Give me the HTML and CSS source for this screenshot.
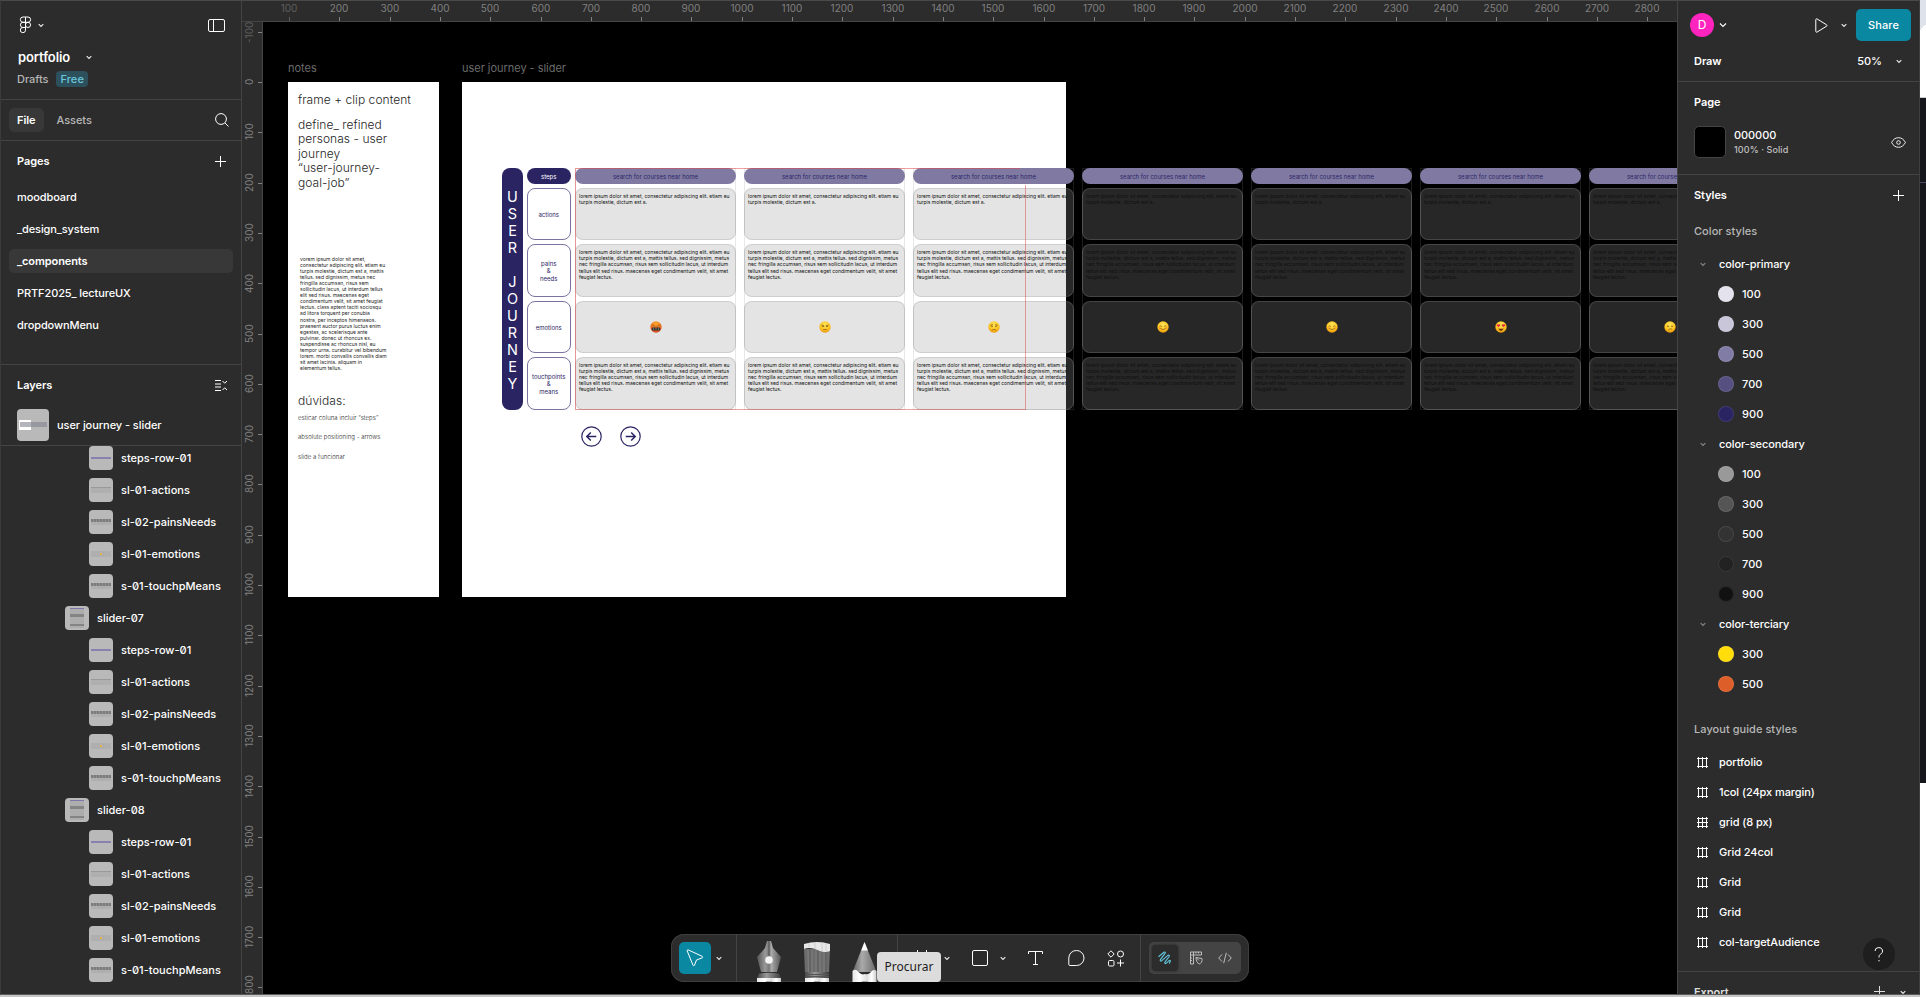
FILE: index.html
```html
<!DOCTYPE html>
<html lang="en">
<head>
<meta charset="utf-8">
<title>portfolio</title>
<link rel="stylesheet" href="styles.css">
</head>
<body>
<svg class="defs" width="0" height="0" aria-hidden="true">
  <defs>
    <radialGradient id="face" cx=".5" cy=".3" r=".7"><stop offset="0" stop-color="#ffe65a"/><stop offset=".65" stop-color="#fcc320"/><stop offset="1" stop-color="#e8930c"/></radialGradient>
    <radialGradient id="rage" cx=".5" cy=".2" r=".8"><stop offset="0" stop-color="#ffa72e"/><stop offset="1" stop-color="#d8481c"/></radialGradient>
    <linearGradient id="metal"><stop offset="0" stop-color="#555"/><stop offset=".35" stop-color="#999"/><stop offset=".5" stop-color="#777"/><stop offset=".6" stop-color="#aaa"/><stop offset="1" stop-color="#555"/></linearGradient>
    <linearGradient id="barrel"><stop offset="0" stop-color="#e6e6e6"/><stop offset=".3" stop-color="#fff"/><stop offset=".6" stop-color="#ddd"/><stop offset=".8" stop-color="#fff"/><stop offset="1" stop-color="#ccc"/></linearGradient>
    <linearGradient id="band"><stop offset="0" stop-color="#444"/><stop offset=".4" stop-color="#999"/><stop offset="1" stop-color="#3c3c3c"/></linearGradient>
    <linearGradient id="lead"><stop offset="0" stop-color="#5d5d5d"/><stop offset=".4" stop-color="#aaa"/><stop offset="1" stop-color="#686868"/></linearGradient>
  </defs>
  <symbol id="chev" viewBox="0 0 6 5"><path d="M.7 1.1 3 3.4 5.3 1.1" fill="none" stroke="currentColor" stroke-width="1.1"/></symbol>
  <symbol id="plus" viewBox="0 0 11 11"><path d="M5.5 0v11M0 5.5h11" stroke="currentColor"/></symbol>
  <symbol id="cols" viewBox="0 0 11 11"><path d="M1.5 0v11M5.5 0v11M9.5 0v11M0 1.5h11M0 9.5h11" stroke="currentColor"/></symbol>
  <symbol id="grid" viewBox="0 0 11 11"><path d="M1.5 0v11M5.5 0v11M9.5 0v11M0 1.5h11M0 5.5h11M0 9.5h11" stroke="currentColor"/></symbol>
</svg>

<div class="app">
  <aside class="left">
    <section class="file-head">
      <div class="brand">
        <svg width="13" height="18" viewBox="0 0 13 18" fill="none" stroke="#fff"><path d="M6.5 1H4a2.6 2.6 0 0 0 0 5.3h2.500zM6.500 1H9a2.600 2.600 0 0 1 0 5.300H6.500zM6.500 6.300H4a2.600 2.600 0 0 0 0 5.200h2.500zM6.500 11.500H4a2.600 2.600 0 1 0 2.500 2.600z"/><circle cx="9" cy="8.900" r="2.600"/></svg>
        <svg class="chev b-chev"><use href="#chev"/></svg>
        <svg class="side-ico" width="17" height="13" viewBox="0 0 17 13" fill="none" stroke="#fff"><rect x=".5" y=".5" width="16" height="12" rx="1.500"/><path d="M5.500 .5v12"/></svg>
      </div>
      <div class="file-name"><b>portfolio</b><svg class="chev"><use href="#chev"/></svg></div>
      <div class="file-sub"><span>Drafts</span><span class="badge">Free</span></div>
    </section>
    <section class="tabs">
      <span class="tab on">File</span><span class="tab">Assets</span>
      <svg class="push" width="14" height="14" viewBox="0 0 14 14" fill="none" stroke="#fff"><circle cx="6" cy="6" r="5.400"/><path d="m10 10 3.500 3.500"/></svg>
    </section>
    <section class="pages">
      <div class="head"><b>Pages</b><svg class="plus push"><use href="#plus"/></svg></div>
      <div class="page">moodboard</div>
      <div class="page">_design_system</div>
      <div class="page on">_components</div>
      <div class="page">PRTF2025_ lectureUX</div>
      <div class="page">dropdownMenu</div>
    </section>
    <section class="layers-top">
      <div class="head collapse"><b>Layers</b><svg class="push" width="13" height="11" viewBox="0 0 13 11" fill="none" stroke="#fff"><path d="M0 .5h6M0 4h6M0 7h6M0 10.500h6M7.500 1l2.200 2.200L12 1M7.500 10l2.200-2.200L12 10"/></svg></div>
      <div class="root-layer"><span class="thumb big"><i class="t-frame"></i><i class="t-strip"></i></span>user journey - slider</div>
    </section>
    <div class="tree" id="tree"></div>
  </aside>

  <main class="stage">
    <div class="ruler-x" id="rulerX"></div>
    <div class="ruler-y" id="rulerY"></div>
    <div class="canvas">
      <span class="label l-notes">notes</span>
      <div class="frame notes">
        <p class="n-title">frame + clip content</p>
        <p class="n-body">define_ refined<br>personas - user<br>journey<br>“user-journey-<br>goal-job”</p>
        <p class="n-lorem">vorem ipsum dolor sit amet,<br>consectetur adipiscing elit. etiam eu<br>turpis molestie, dictum est a, mattis<br>tellus. sed dignissim, metus nec<br>fringilla accumsan, risus sem<br>sollicitudin lacus, ut interdum tellus<br>elit sed risus. maecenas eget<br>condimentum velit, sit amet feugiat<br>lectus. class aptent taciti sociosqu<br>ad litora torquent per conubia<br>nostra, per inceptos himenaeos.<br>praesent auctor purus luctus enim<br>egestas, ac scelerisque ante<br>pulvinar. donec ut rhoncus ex.<br>suspendisse ac rhoncus nisl, eu<br>tempor urna. curabitur vel bibendum<br>lorem. morbi convallis convallis diam<br>sit amet lacinia. aliquam in<br>elementum tellus.</p>
        <p class="n-doubt">dúvidas:</p>
        <p class="n-small">esticar coluna incluir “steps”</p>
        <p class="n-small">absolute positioning - arrows</p>
        <p class="n-small">slide a funcionar</p>
      </div>
      <span class="label l-journey">user journey - slider</span>
      <div class="frame journey"></div>
      <div class="board">
        <div class="spine"><span>U</span><span>S</span><span>E</span><span>R</span><span></span><span>J</span><span>O</span><span>U</span><span>R</span><span>N</span><span>E</span><span>Y</span></div>
        <div class="heads">
          <div class="pill">steps</div>
          <div class="cell">actions</div>
          <div class="cell">pains<br>&amp;<br>needs</div>
          <div class="cell">emotions</div>
          <div class="cell">touchpoints<br>&amp;<br>means</div>
        </div>
        <div class="slider" id="slider"></div>
      </div>
      <div class="selection"></div>
      <div class="arrows">
        <svg width="21" height="21" viewBox="0 0 21 21" fill="none" stroke="#2a2463" stroke-width="1.200"><circle cx="10.500" cy="10.500" r="9.700"/><path stroke-width="1.500" d="M15.300 10.500H6M9.800 6.500l-4 4 4 4"/></svg>
        <svg width="21" height="21" viewBox="0 0 21 21" fill="none" stroke="#2a2463" stroke-width="1.200"><circle cx="10.500" cy="10.500" r="9.700"/><path stroke-width="1.500" d="M5.700 10.500H15M11.200 6.500l4 4-4 4"/></svg>
      </div>

      <div class="toolbar">
        <div class="tb-group g1">
          <span class="tb-btn"><svg width="18" height="18" viewBox="0 0 18 18" fill="none" stroke="#fff" stroke-linejoin="round"><path d="M1.200 1.900 7 16.200c.3.700 1.200.7 1.500 0l2-5.200 5.800-2.200c.6-.3.600-1.100 0-1.400L2.200.9C1.500.600.900 1.200 1.200 1.900z"/></svg></span>
          <svg class="chev"><use href="#chev"/></svg>
        </div>
        <div class="tb-group g2">
          <svg width="24" height="41" viewBox="0 0 24 41"><path d="M10 0h4l2 7 8 9-4 15H4L0 16l8-9z" fill="url(#metal)"/><path d="M12 0v15" stroke="#555" stroke-width="1"/><circle cx="12" cy="19" r="3.800" fill="#f4f4f4"/><path d="M2 32.500q10-1.500 20 0l2 4.500H0z" fill="url(#band)"/><path d="M0 37h24v4H0z" fill="url(#barrel)"/><path d="M9 40h6v1H9z" fill="#aaa"/></svg>
          <svg width="26" height="41" viewBox="0 0 26 41"><path d="M0 8h26l-1 24H1z" fill="#6c6c6c"/><path d="M4 9l.5 23M8 9v23M12 9v23M16 9v23M20 9v23" stroke="#808080"/><path d="M6 9v22M14 9v22M22 9v23" stroke="#5c5c5c"/><path d="M0 8V3q13-4 26 0v7q-5 2-10 0Q6 5 0 8z" fill="#e8e8e8"/><path d="M5 2v4M11 1v7M18 1v9M22 2v8" stroke="#ccc"/><path d="M1 31h24v6H1z" fill="url(#band)"/><path d="M1 33.500h24M1 35.500h24" stroke="#555"/><path d="M1 37h24v4H1z" fill="url(#barrel)"/><path d="M10 40h6v1h-6z" fill="#aaa"/></svg>
          <svg width="25" height="41" viewBox="0 0 25 41"><path d="M12.500 1 24.500 31H.5z" fill="url(#lead)"/><path d="M12.500 1 15.900 9.500H9.300z" fill="#fff"/><path d="M.5 30q3-3 6 1 3 3.500 6.500 2 3.500 1 5.500-1.500 3-4 6-1.500V41H.5z" fill="url(#barrel)"/><path d="M10 40h6v1h-6z" fill="#aaa"/></svg>
        </div>
        <div class="tb-group g3">
          <svg class="i-frame" width="16" height="16" viewBox="0 0 16 16" fill="none" stroke="#fff"><path d="M3.500 0v16M12.500 0v16M0 3.500h16M0 12.500h16"/></svg>
          <svg class="chev c1"><use href="#chev"/></svg>
          <svg class="i-rect" width="16" height="16" viewBox="0 0 16 16" fill="none" stroke="#fff"><rect x=".5" y=".5" width="15" height="15" rx="1.500"/></svg>
          <svg class="chev c2"><use href="#chev"/></svg>
          <svg class="i-text" width="16" height="16" viewBox="0 0 16 16" fill="none" stroke="#fff"><path d="M.5 4V1.500h14V4M7.500 1.500v13M5 14.500h5"/></svg>
          <svg class="i-chat" width="17" height="16" viewBox="0 0 17 16" fill="none" stroke="#fff"><path d="M8.500.5a7.500 7.500 0 0 1 0 15H2a1.200 1.200 0 0 1-1.200-1.200V8A7.500 7.500 0 0 1 8.500.5z"/></svg>
          <svg class="i-comp" width="17" height="17" viewBox="0 0 17 17" fill="none" stroke="#fff"><path d="M4 .8 7.200 4 4 7.200.8 4zM13.500 9.500v7M10 13h7"/><circle cx="13.500" cy="4" r="3"/><rect x="1.500" y="10.500" width="5.500" height="5.500" rx="1.200"/></svg>
        </div>
        <div class="tb-group g4">
          <div class="modes">
            <span class="mode on"><svg width="14" height="14" viewBox="0 0 14 14" fill="none" stroke="#63c7df" stroke-width="1.100" stroke-linecap="round" stroke-linejoin="round"><path d="M.8 5.500 6 1.300c1-.7 1.800.2 1.100 1.100L2.400 8.700c-.6 1 .3 1.900 1.200 1.100l6.200-5.400c1-.8 2 .1 1.300 1.100l-4.200 5.700c-.6 1 .3 1.800 1.200 1.100l3-2.600c.8-.6 1.500-.2 1.200.5l-.9 2"/></svg></span>
            <span class="mode"><svg width="14" height="14" viewBox="0 0 14 14" fill="none" stroke="#bdbdbd"><path d="M4 13H1.500V1h11v3H4.500v9zM4.500 1v3H1.500M7 1v1.500M9.500 1v1.500M1.500 7H3M1.500 9.500H3M7 6.500l6 1c.5 3-1 5-2.700 5.500C8 12 7 9.500 7 6.500zl3 3"/></svg></span>
            <span class="mode"><svg width="14" height="12" viewBox="0 0 14 12" fill="none" stroke="#bdbdbd"><path d="M4 2.500.7 6 4 9.500M10 2.500 13.300 6 10 9.500M8.300.8 5.700 11.200"/></svg></span>
          </div>
        </div>
        <div class="tip">Procurar</div>
      </div>
    </div>
  </main>

  <aside class="right">
    <section class="top">
      <div class="user">
        <span class="avatar">D</span><svg class="chev lg" viewBox="0 0 8 6"><path d="M1 1.500 4 4.500 7 1.500" fill="none" stroke="#fff" stroke-width="1.100"/></svg>
        <svg class="play" width="13" height="15" viewBox="0 0 13 15" fill="none" stroke="#fff"><path d="M.8 1.600v11.800c0 .7.700 1 1.200.7l9.700-6c.5-.3.500-.9 0-1.200L2 .9C1.500.600.8.900.8 1.600z"/></svg>
        <svg class="chev"><use href="#chev"/></svg>
        <span class="share">Share</span>
      </div>
      <div class="mode-row"><b>Draw</b><span class="zoom">50%</span><svg class="chev"><use href="#chev"/></svg></div>
    </section>
    <section class="page-sec">
      <div class="head"><b>Page</b></div>
      <div class="paint"><span class="swatch"></span><span class="paint-t"><em>000000</em><small>100% · Solid</small></span>
        <svg class="push" width="15" height="11" viewBox="0 0 15 11" fill="none" stroke="#eee"><path d="M.6 5.500C2.200 2.300 4.600.7 7.500.7s5.300 1.600 6.900 4.800c-1.600 3.200-4 4.800-6.900 4.800S2.200 8.700.6 5.500z"/><circle cx="7.500" cy="5.500" r="1.800"/></svg></div>
    </section>
    <section class="styles">
      <div class="head"><b>Styles</b><svg class="plus push"><use href="#plus"/></svg></div>
      <div class="sub">Color styles</div>
      <div class="group"><svg class="chev"><use href="#chev"/></svg>color-primary</div>
      <div class="color"><i class="p1"></i>100</div>
      <div class="color"><i class="p3"></i>300</div>
      <div class="color"><i class="p5"></i>500</div>
      <div class="color"><i class="p7"></i>700</div>
      <div class="color"><i class="p9"></i>900</div>
      <div class="group"><svg class="chev"><use href="#chev"/></svg>color-secondary</div>
      <div class="color"><i class="s1"></i>100</div>
      <div class="color"><i class="s3"></i>300</div>
      <div class="color"><i class="s5"></i>500</div>
      <div class="color"><i class="s7"></i>700</div>
      <div class="color"><i class="s9"></i>900</div>
      <div class="group"><svg class="chev"><use href="#chev"/></svg>color-terciary</div>
      <div class="color"><i class="t3"></i>300</div>
      <div class="color"><i class="t5"></i>500</div>
      <div class="sub guides">Layout guide styles</div>
      <div class="guide"><svg><use href="#cols"/></svg>portfolio</div>
      <div class="guide"><svg><use href="#cols"/></svg>1col (24px margin)</div>
      <div class="guide"><svg><use href="#grid"/></svg>grid (8 px)</div>
      <div class="guide"><svg><use href="#cols"/></svg>Grid 24col</div>
      <div class="guide"><svg><use href="#cols"/></svg>Grid</div>
      <div class="guide"><svg><use href="#cols"/></svg>Grid</div>
      <div class="guide"><svg><use href="#cols"/></svg>col-targetAudience</div>
    </section>
    <section class="export"><div class="head"><b>Export</b><svg class="plus push"><use href="#plus"/></svg><svg class="chev"><use href="#chev"/></svg></div></section>
    <span class="help"><svg width="10" height="15" viewBox="0 0 10 15" fill="none" stroke="#fff"><path d="M1 4a3.800 3.500 0 1 1 5.600 3.100C5.400 7.900 5 8.500 5 10.500M5 13v1.300"/></svg></span>
  </aside>

  <div class="outside"><i class="o1"></i><i class="o2"></i><i class="o3"></i><i class="o4"></i></div>
</div>
<script src="app.js"></script>
</body>
</html>
```
FILE: styles.css
```css
* { box-sizing: border-box; }
body { margin: 0; background: #c6c6c6; font: 450 11px/16px Inter, "Open Sans", sans-serif; letter-spacing: -.06px; color: #fff; }
p { margin: 0; }
b { font-weight: 600; }
svg { display: block; flex: none; }
.defs { position: absolute; }
.app { display: grid; grid-template-columns: 242px 1435px 243px 6px; height: 997px; overflow: hidden; }
.left, .right, .stage { height: 995px; border-top: 1px solid #4a4a4a; border-bottom: 1px solid #5c5c5c; overflow: hidden; }
.left, .right { background: #2c2c2c; }
.left { border-left: 1px solid #3a3a3a; border-right: 1px solid #444; }
section { border-bottom: 1px solid #444; }
.chev { width: 6px; height: 5px; color: #eee; }
.plus { width: 11px; height: 11px; }
.push { margin-left: auto; }
.head { display: flex; align-items: center; height: 40px; padding: 0 15px 0 16px; }
.head.collapse { padding-right: 13px; }

.file-head { height: 99px; }
.brand { display: flex; align-items: center; height: 48px; padding: 0 16px 0 18px; }
.b-chev { margin-left: 6px; }
.side-ico { margin-left: auto; }
.file-name { display: flex; align-items: center; gap: 16px; height: 16px; padding-left: 17px; font-size: 13px; letter-spacing: -.1px; }
.file-sub { display: flex; align-items: center; gap: 8px; height: 16px; margin-top: 6px; padding-left: 16px; color: #b5b5b5; }
.badge { height: 16px; padding: 0 4px; border-radius: 4px; background: #2c515d; color: #6cc6de; letter-spacing: .1px; }
.tabs { display: flex; align-items: center; gap: 5px; height: 41px; padding: 0 12px 0 8px; }
.tab { padding: 4px 8px; border-radius: 5px; color: #b8b8b8; }
.tab.on { background: #383838; color: #fff; font-weight: 600; }
.pages { height: 224px; }
.page { display: flex; align-items: center; height: 24px; margin: 4px 8px 8px; padding-left: 8px; border-radius: 5px; letter-spacing: -.1px; }
.page.on { background: #383838; font-weight: 600; }
.layers-top { height: 81px; }
.root-layer { display: flex; align-items: center; gap: 8px; height: 40px; padding-left: 16px; }
.tree { display: flex; flex-direction: column; margin-top: -4px; font-feature-settings: "zero"; letter-spacing: 0; }
.row { display: flex; align-items: center; gap: 8px; height: 32px; padding-left: 88px; flex: none; }
.row.parent { padding-left: 64px; }
.thumb { position: relative; display: block; flex: none; width: 24px; height: 24px; border-radius: 4px; background: #b9b9b9; overflow: hidden; }
.thumb.big { width: 32px; height: 32px; }
.thumb i { position: absolute; left: 2px; right: 2px; }
.t-steps { top: 11px; height: 2px; background: #8781b0; }
.t-box { top: 9px; height: 6px; background: #afafaf; }
.t-light { top: 9px; height: 1px; background: #999; }
.t-dark { top: 9px; height: 3px; background: repeating-linear-gradient(90deg, #7c7c7c 0 2px, #909090 2px 3px); }
.t-dot { top: 11px; height: 2px; background: linear-gradient(90deg, transparent 9px, #e9b147 9px 11px, transparent 11px); }
.thumb .t-col { left: 5px; right: 5px; top: 2px; height: 20px; background: linear-gradient(#7d77a8 0 1px, transparent 1px 6.5px, #848484 6.5px 9px, transparent 9px 16px, #848484 16px 18.500px, transparent 18.500px), #adadad; }
.thumb .t-frame { top: 11px; left: 2px; width: 12px; height: 10px; background: #fff; }
.thumb .t-strip { top: 13px; left: 3px; height: 5px; right: 2px; background: rgba(130,130,145,.6); }

.stage { display: grid; grid-template: 21px 1fr / 21px 1fr; background: #2c2c2c; }
.ruler-x { grid-area: 1 / 1 / 2 / 3; position: relative; border-bottom: 1px solid #444; overflow: hidden; }
.ruler-y { grid-area: 2 / 1; position: relative; border-right: 1px solid #444; overflow: hidden; }
.mark { position: absolute; color: #808080; font-size: 10px; font-weight: 400; line-height: 12px; letter-spacing: 0; }
.ruler-x .mark { top: 1px; width: 40px; margin-left: -20px; text-align: center; }
.ruler-x .mark::after { content: ""; position: absolute; left: 20px; top: 15px; width: 1px; height: 4px; background: #808080; }
.ruler-y .mark { left: 1px; width: 12px; height: 40px; margin-top: -20px; writing-mode: vertical-rl; transform: rotate(180deg); text-align: center; }
.ruler-y .tick { position: absolute; right: 0; width: 4px; height: 1px; background: #808080; }
.mark.dim { opacity: .6; }

/* free canvas: frames sit at their own coordinates */
.canvas { position: relative; background: #000; overflow: hidden; }
.label { position: absolute; top: 38px; color: #6b6b6b; font-weight: 400; letter-spacing: -.03px; }
.l-notes { left: 25px; }
.l-journey { left: 199px; }
.frame { position: absolute; top: 60px; height: 515px; background: #fff; color: #1e1e1e; }
.notes { left: 25px; width: 151px; padding: 11px 0 0 10px; font-weight: 300; font-size: 12px; line-height: 14.600px; letter-spacing: .05px; }
.journey { left: 199px; width: 604px; }
.n-body { margin-top: 10px; }
.n-lorem { margin: 65.500px 0 0 2px; font-size: 5px; line-height: 6.050px; font-weight: 400; white-space: nowrap; letter-spacing: 0; }
.n-doubt { margin-top: 23px; }
.n-small { position: relative; top: -1px; height: 19.500px; font-size: 6px; line-height: 19.500px; }
.board { position: absolute; left: 239px; top: 146px; display: flex; height: 242px; letter-spacing: 0; }
.spine { display: flex; flex-direction: column; width: 21px; padding-top: 19.500px; border-radius: 8px; background: #2a2463; font-size: 14.500px; font-weight: 400; text-align: center; }
.spine span { height: 17.050px; line-height: 17.050px; }
.heads { display: flex; flex-direction: column; gap: 4px; width: 44.500px; margin-left: 3.500px; font-size: 6px; line-height: 7.500px; font-weight: 400; }
.pill { display: flex; align-items: center; justify-content: center; height: 16px; padding-top: 1px; border-radius: 8px; background: #2a2463; color: #fff; }
.cell { display: flex; align-items: center; justify-content: center; height: 52.400px; padding-top: 1px; border: 1px solid #7a75a0; border-radius: 8px; color: #2a2463; text-align: center; }
.slider { display: flex; gap: 8px; margin-left: 4px; }
.col { display: flex; flex-direction: column; gap: 4px; width: 161px; height: 242px; flex: none; box-shadow: inset 0 0 0 1px rgba(140,140,140,.2); }
.step { display: flex; align-items: center; justify-content: center; height: 16px; padding-top: 1.500px; border-radius: 8px; background: #807aa2; color: #2c2566; font-size: 6px; font-weight: 400; }
.box { display: flex; height: 52.400px; padding: 4px 0 0 3px; border: 1px solid rgba(149,149,149,.28); border-radius: 8px; background: rgba(149,149,149,.26); color: #101010; font-size: 5px; font-weight: 400; line-height: 6.050px; white-space: nowrap; }
.box.mood { align-items: center; justify-content: center; padding: 0; }
.selection { position: absolute; left: 312px; top: 146px; width: 451px; height: 242px; border: 1px solid rgba(222,70,70,.5); clip-path: polygon(0 0, 445px 0, 445px 17px, 100% 17px, 100% 100%, 0 100%); }
.arrows { position: absolute; left: 318px; top: 404px; display: flex; gap: 18px; }

.toolbar { position: absolute; left: 408px; top: 912px; display: flex; width: 578px; height: 48px; border-radius: 13px; background: #2c2c2c; box-shadow: inset 0 0 0 1px #3e3e3e; }
.tb-group { display: flex; align-items: center; border-right: 1px solid #444; }
.g1 { width: 66px; padding-left: 8px; gap: 5px; }
.tb-btn { display: flex; align-items: center; justify-content: center; width: 32px; height: 32px; border-radius: 5px; background: #0a87a1; }
.g2 { width: 161px; padding: 7px 0 0 20px; align-items: flex-start; gap: 22.500px; }
.g3 { width: 243px; padding-left: 16px; }
.c1 { margin-left: 14px; }
.i-rect { margin-left: 22px; }
.c2 { margin-left: 12px; }
.i-text { margin-left: 22px; }
.i-chat { margin-left: 24px; }
.i-comp { margin-left: 22px; }
.g4 { flex: 1; border: 0; padding-left: 8px; }
.modes { display: flex; align-items: center; width: 92px; height: 32px; padding: 3px; border-radius: 5px; background: #444; }
.mode { display: flex; align-items: center; justify-content: center; width: 35px; height: 26px; }
.mode:last-child { width: 24px; }
.mode.on { width: 26px; border-radius: 4px; background: #2c2c2c; box-shadow: 0 0 3px rgba(0,0,0,.5); }
.tip { position: absolute; left: 206px; top: 18px; width: 64px; height: 30px; border-radius: 4px; background: #dcdcdc; color: #1c1c1c; font: 12px/30px "Noto Sans", sans-serif; letter-spacing: 0; text-align: center; }

.right { position: relative; border-left: 1px solid #444; border-right: 1px solid #3e3e3e; }
.top { height: 81px; }
.user { display: flex; align-items: center; height: 48px; padding: 0 8px 0 12px; }
.avatar { width: 24px; height: 24px; margin-right: 5px; border-radius: 50%; background: #ff24bd; line-height: 24px; text-align: center; font-size: 12px; font-weight: 400; }
.chev.lg { width: 8px; height: 6px; }
.play { margin-left: 88px; }
.play + .chev { margin-left: 13px; }
.share { width: 55px; height: 32px; margin-left: auto; border-radius: 5px; background: #0a87a1; line-height: 32px; text-align: center; font-weight: 500; letter-spacing: .1px; }
.mode-row { display: flex; align-items: center; height: 24px; padding: 0 17px 0 16px; }
.zoom { margin: 0 14px 0 auto; font-weight: 500; }
.page-sec { height: 93px; }
.paint { display: flex; align-items: center; gap: 8px; height: 40px; padding: 0 13px 0 16px; }
.swatch { width: 32px; height: 32px; border: 1px solid #444; border-radius: 5px; background: #000; }
.paint-t { display: flex; flex-direction: column; }
.paint-t em { font-style: normal; line-height: 15px; }
.paint-t small { font-size: 9px; line-height: 14px; color: #c0c0c0; letter-spacing: .1px; }
.styles { height: 797px; }
.sub { height: 34px; padding-bottom: 2px; display: flex; align-items: center; padding-left: 16px; color: #b8b8b8; letter-spacing: .05px; }
.sub.guides { height: 48px; padding: 12px 0 0 16px; }
.group, .color, .guide { display: flex; align-items: center; height: 30px; }
.group { padding-left: 22px; gap: 13px; letter-spacing: -.09px; }
.group .chev { color: #8a8a8a; }
.color { padding-left: 40px; gap: 8px; letter-spacing: .05px; }
.color i { width: 16px; height: 16px; border-radius: 50%; box-shadow: inset 0 0 0 1px rgba(255,255,255,.1); }
.guide { padding-left: 19px; gap: 11px; letter-spacing: -.07px; }
.guide svg { width: 11px; height: 11px; }
.p1 { background: #e4e2ed; } .p3 { background: #c9c6da; } .p5 { background: #817ca5; } .p7 { background: #565080; } .p9 { background: #2a2463; }
.s1 { background: #999; } .s3 { background: #555; } .s5 { background: #333; } .s7 { background: #222; } .s9 { background: #111; }
.t3 { background: #ffdd0a; } .t5 { background: #de5e29; }
.export { border: 0; color: #ddd; }
.export .head { padding: 0 13px 0 16px; }
.export .chev { margin-left: 15px; }
.export .plus { margin-top: -1px; }
.help { position: absolute; right: 24px; top: 937px; display: flex; align-items: center; justify-content: center; width: 32px; height: 32px; border-radius: 50%; background: #1e1e1e; }

.outside { display: flex; flex-direction: column; height: 997px; background: #fff; }
.o1 { height: 34px; background: linear-gradient(135deg, #dde2eb 75%, #fff 75%); }
.o2 { height: 64px; border-bottom: 1px solid #ccc; background: #fff; }
.o3 { height: 85px; border-bottom: 1px solid #4a4a66; background: #15171c; }
.o4 { height: 600px; background: #15171c; }
```
FILE: app.js
```js
const kinds = {
  steps: '<i class="t-steps"></i>',
  actions: '<i class="t-box"></i><i class="t-light"></i>',
  pains: '<i class="t-box"></i><i class="t-dark"></i>',
  mood: '<i class="t-box"></i><i class="t-dot"></i>',
  slider: '<i class="t-col"></i>'
};
const children = [['steps-row-01', 'steps'], ['sl-01-actions', 'actions'], ['sl-02-painsNeeds', 'pains'], ['sl-01-emotions', 'mood'], ['s-01-touchpMeans', 'pains']];
const rows = [...children, ['slider-07', 'slider'], ...children, ['slider-08', 'slider'], ...children];
document.getElementById('tree').innerHTML = rows.map(([name, kind]) =>
  `<div class="row${kind === 'slider' ? ' parent' : ''}"><span class="thumb">${kinds[kind]}</span>${name}</div>`).join('');

const step = 50.3;
let x = '';
for (let i = 0; i < 28; i++) {
  x += `<span class="mark${i ? '' : ' dim'}" style="left:${Math.round(47 + i * step)}px">${(i + 1) * 100}</span>`;
}
document.getElementById('rulerX').innerHTML = x;
let y = '';
for (let i = -1; i < 19; i++) {
  const top = Math.round(60 + i * step);
  y += `<span class="mark${i < 0 ? ' dim' : ''}" style="top:${top}px">${i * 100}</span><i class="tick" style="top:${top}px"></i>`;
}
document.getElementById('rulerY').innerHTML = y;

const short = 'lorem ipsum dolor sit amet, consectetur adipiscing elit. etiam eu<br>turpis molestie, dictum est a.';
const long = 'lorem ipsum dolor sit amet, consectetur adipiscing elit. etiam eu<br>turpis molestie, dictum est a, mattis tellus. sed dignissim, metus<br>nec fringilla accumsan, risus sem sollicitudin lacus, ut interdum<br>tellus elit sed risus. maecenas eget condimentum velit, sit amet<br>feugiat lectus.';
const eyes = '<circle cx="4" cy="5.200" r=".7" fill="#5a3a10"/><circle cx="8" cy="5.200" r=".7" fill="#5a3a10"/>';
const ink = 'fill="none" stroke="#8a5a14" stroke-width=".7" stroke-linecap="round"';
const faces = {
  rage: `<path d="M2.800 4.200 5 5.300M9.200 4.200 7 5.300" ${ink}/><rect x="1.800" y="6.600" width="8.400" height="3" rx=".8" fill="#333"/><path d="M3 8h1M5.500 8h1M8 8h1" stroke="#ccc" stroke-width=".8"/>`,
  angry: `<path d="M2.600 4 4.900 5M9.400 4 7.100 5M4.500 8.500h3" ${ink}/>${eyes}`,
  sad: `<path d="M2.600 4.200 4.500 3.500M9.400 4.200 7.500 3.500M4 9q2-1.600 4 0" ${ink}/>${eyes}`,
  happy: `<path d="M2.800 5.300q1-1.400 2 0M7.200 5.300q1-1.400 2 0M3.300 7.500q2.700 2.600 5.400 0" ${ink}/><circle cx="2.700" cy="7" r="1" fill="#f58a3c" opacity=".6"/><circle cx="9.300" cy="7" r="1" fill="#f58a3c" opacity=".6"/>`,
  love: '<path d="M3.500 6.300 1.600 4.300q.3-1.700 1.900-.8 1.600-.9 1.900.8zM8.500 6.300 6.600 4.300q.3-1.700 1.900-.8 1.600-.9 1.900.8z" fill="#e8283c"/><path d="M3.400 7.300q2.600 1 5.200 0-.5 2.700-2.600 2.700T3.400 7.300z" fill="#6b2c10"/>',
  confused: `<path d="M4.300 8.900q1.500-1.500 3.500-1" ${ink}/>${eyes}`
};
const moods = ['rage', 'angry', 'sad', 'happy', 'happy', 'love', 'confused'];
document.getElementById('slider').innerHTML = moods.map(m =>
  `<div class="col"><div class="step">search for courses near home</div><div class="box"><p>${short}</p></div><div class="box"><p>${long}</p></div>` +
  `<div class="box mood"><svg width="12" height="12" viewBox="0 0 12 12"><circle cx="6" cy="6" r="5.700" fill="url(#${m === 'rage' ? 'rage' : 'face'})"/>${faces[m]}</svg></div>` +
  `<div class="box"><p>${long}</p></div></div>`).join('');
```
